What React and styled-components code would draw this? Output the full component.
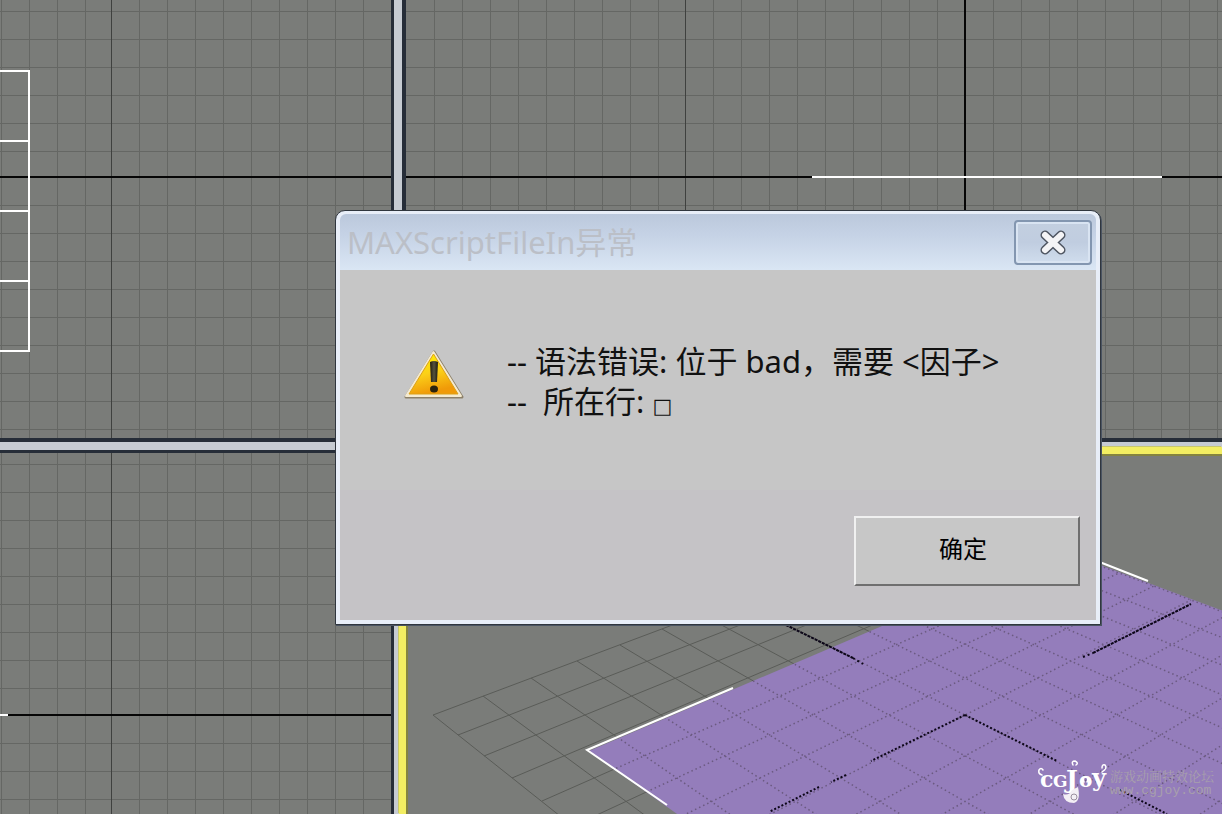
import styled, { createGlobalStyle } from 'styled-components';

const GlobalStyle = createGlobalStyle`
  * {
    box-sizing: border-box;
  }

  body {
    margin: 0;
    overflow: hidden;
    font-family: 'Noto Sans', 'Noto Sans CJK SC', sans-serif;
  }
`;

const Workspace = styled.main`
  position: relative;
  display: grid;
  grid-template-columns: minmax(0, 391fr) 15px minmax(0, 816fr);
  grid-template-rows: minmax(0, 438fr) 15px minmax(0, 361fr);
  height: 100vh;
  overflow: hidden;
  background: #797b78;
`;

const Viewport = styled.section`
  grid-column: ${(props) => props.$col};
  grid-row: ${(props) => props.$row};
  background: #7a7c79;
  overflow: hidden;

  svg {
    display: block;
    width: 100%;
    height: 100%;
  }
`;

/* the active view overlaps half of the splitters with its yellow frame */
const ActiveViewport = styled(Viewport)`
  z-index: 1;
  margin: -6px 0 0 -7px;
  border: solid #f3ee62;
  border-width: 7px 0 0 7px;
  box-shadow: inset 2px 2px 0 #85843f, -1px -1px 0 #c9c86c;
`;

const SplitterX = styled.div`
  grid-column: 1 / 4;
  grid-row: 2;
  background: #c6cbd2;
  border: solid #262d38;
  border-width: 4px 0 3px;
`;

const SplitterY = styled.div`
  grid-column: 2;
  grid-row: 1 / 4;
  background: #c6cbd2;
  border: solid #262d38;
  border-width: 0 4px 0 3px;
`;

const Dialog = styled.div`
  position: absolute;
  z-index: 2;
  top: 210px;
  left: 335px;
  width: 766px;
  display: flex;
  flex-direction: column;
  padding: 3px 4px 4px;
  border: 1px solid #30363e;
  border-radius: 10px 10px 0 0;
  background: #e8eef8;
  box-shadow: 1px 1px 0 #4a5462;
`;

const TitleBar = styled.header`
  display: flex;
  justify-content: space-between;
  align-items: flex-start;
  height: 56px;
  padding: 6px 4px 0 7px;
  border-radius: 6px 6px 0 0;
  background: linear-gradient(#bbc8dc, #c6d3e6 40%, #dae6f4);
`;

const Title = styled.h1`
  margin: 0;
  font-size: 31px;
  font-weight: 400;
  line-height: 44px;
  color: #bbbfc7;
`;

const CloseButton = styled.button`
  display: flex;
  align-items: center;
  justify-content: center;
  width: 78px;
  height: 45px;
  padding: 0;
  border: 2px solid #8396b0;
  border-radius: 4px;
  background: linear-gradient(#c3cfe0, #c0cde0 50%, #d0dded);
  box-shadow: inset 0 0 0 2px #d9e4f2;
`;

const Message = styled.div`
  display: flex;
  align-items: flex-start;
  gap: 43px;
  height: 220px;
  padding: 71px 24px 0 64px;
  background: #c6c6c6;

  svg {
    flex: none;
    margin-top: 8px;
  }
`;

const MessageText = styled.p`
  margin: 0;
  font-size: 31px;
  line-height: 40px;
  white-space: pre;
  color: #111;
`;

const Box = styled.span`
  font-family: 'DejaVu Sans', sans-serif;
  font-size: 21px;
  line-height: 20px;
`;

const Footer = styled.footer`
  display: flex;
  justify-content: flex-end;
  padding: 26px 16px 34px;
  background: #c5c3c6;
`;

const OkButton = styled.button`
  width: 226px;
  height: 70px;
  padding: 0 8px 8px 0;
  border: 2px solid;
  border-color: #f0f0f0 #6f6f6f #6f6f6f #f0f0f0;
  background: #c7c7c7;
  font-family: 'Liberation Sans', 'Noto Sans CJK SC', sans-serif;
  font-size: 24px;
  color: #000;
`;

const Watermark = styled.aside`
  position: absolute;
  z-index: 1;
  right: 8px;
  bottom: 8px;
  display: flex;
  align-items: center;
  gap: 2px;
`;

const WatermarkText = styled.div`
  display: flex;
  flex-direction: column;
  font-family: 'Noto Serif CJK SC', 'Noto Sans CJK SC', sans-serif;
  font-size: 13px;
  line-height: 16px;
  color: #a8a0ac;
`;

const SiteLink = styled.a`
  font-family: 'Liberation Mono', monospace;
  font-size: 13px;
  line-height: 14px;
  text-decoration: none;
  color: #a8a0ac;
`;

const range = (start, end, step = 28) => {
  const out = [];
  for (let n = start; n <= end; n += step) out.push(n);
  return out;
};

// orthographic grid, majors are drawn darker than the rest
const OrthoGrid = ({ xs, ys, majorX, axisY, children }) => (
  <svg aria-hidden="true" shapeRendering="crispEdges">
    <g fill="#656764">
      {xs.map((x) => <rect key={x} x={x} y="0" width="1" height="100%" />)}
      {ys.map((y) => <rect key={y} x="0" y={y} width="100%" height="1" />)}
    </g>
    <rect x={majorX} y="0" width="1" height="100%" fill="#3f413f" />
    <rect x="0" y={axisY} width="100%" height="2" fill="#060606" />
    {children}
  </svg>
);

// perspective floor: u, v are grid cells from the world origin
const project = (u, v) => {
  const w = 1 + 0.0256 * (u + v);
  return [559 + (38 * (u - v)) / w, 261 - 758 + 758 / w];
};

const pathOf = (points) =>
  'M' + points.map(([u, v]) => project(u, v).map(Math.round).join(' ')).join('L');

const floorLines = range(-7, 7, 1)
  .map((n) => pathOf([[n, -7], [n, 7]]) + pathOf([[-7, n], [7, n]]))
  .join('');

const planePath = pathOf([[-5.6, 3.85], [7.05, 3.85], [7.05, -8.7], [-5.6, -8.7]]) + 'Z';

const Floor = () => (
  <svg aria-hidden="true">
    <defs>
      <clipPath id="plane">
        <path d={planePath} />
      </clipPath>
    </defs>
    <path d={floorLines} fill="none" stroke="#5a5c58" />
    <path d={planePath} fill="#947dbb" />
    <g clipPath="url(#plane)">
      <path d={floorLines} fill="none" stroke="#6b5a80" strokeWidth="1.5" strokeDasharray="1.5 3" />
    </g>
    <g fill="none" stroke="#0c0618" strokeWidth="2">
      <path d="M380 171L447 204M687 199L785 150" strokeDasharray="3 1" />
      <path d="M447 204L457 210M677 203L687 199" strokeDasharray="2 3" />
      <path d="M559 261L465 307M559 261L651 307M440 321L425 328M413 333L363 358M714 336L761 360" strokeDasharray="2 2" />
    </g>
    <g fill="none" stroke="#fff" strokeWidth="2">
      <path d="M327 234L181 296L261 351M691 107L742 127" />
    </g>
  </svg>
);

const WarningIcon = () => (
  <svg width="60" height="52" viewBox="0 0 60 52" role="img" aria-label="警告">
    <defs>
      <linearGradient id="warn" x1="0" y1="0" x2="0.3" y2="1">
        <stop offset="0" stopColor="#fff200" />
        <stop offset="0.55" stopColor="#fbd018" />
        <stop offset="1" stopColor="#f09a08" />
      </linearGradient>
      <linearGradient id="bang" x1="0" y1="0" x2="1" y2="0">
        <stop offset="0" stopColor="#1c1a10" />
        <stop offset="0.5" stopColor="#55523c" />
        <stop offset="1" stopColor="#1c1a10" />
      </linearGradient>
    </defs>
    <path d="M30 3L58 48H2Z" fill="#8c8069" stroke="#8c8069" strokeWidth="3" strokeLinejoin="round" />
    <path d="M29.500 3L57 47H2Z" fill="#f4ead0" stroke="#f4ead0" strokeWidth="2" strokeLinejoin="round" />
    <path d="M29.500 5L54 45H5Z" fill="url(#warn)" stroke="#dda117" strokeWidth="1" strokeLinejoin="round" />
    <path d="M26 13Q30 11 34 13L33 33H27Z" fill="url(#bang)" />
    <ellipse cx="30" cy="40" rx="4" ry="3.500" fill="#2c240e" />
  </svg>
);

const CloseIcon = () => (
  <svg width="30" height="28" viewBox="0 0 30 28" aria-hidden="true">
    <g fill="none" strokeLinecap="round">
      <path d="M7 6L23 21M23 6L7 21" stroke="#4c535f" strokeWidth="9" />
      <path d="M7 6L23 21M23 6L7 21" stroke="#f4f4f6" strokeWidth="6" />
    </g>
  </svg>
);

const Logo = () => (
  <svg width="70" height="46" viewBox="0 0 70 46" role="img" aria-label="cgjoy">
    <g fill="#fff" fontFamily="DejaVu Serif, serif" fontWeight="700">
      <text x="2" y="27" fontSize="22">c</text>
      <text x="15" y="27" fontSize="17">G</text>
      <text x="28" y="28" fontSize="25">J</text>
      <text x="41" y="27" fontSize="20">o</text>
      <text x="54" y="26" fontSize="24">y</text>
    </g>
    <g fill="none" stroke="#fff" strokeWidth="1.5" strokeLinecap="round">
      <path d="M4 15Q0 14 1 10Q3 7 5 10" />
      <path d="M35 5Q33 1 37 1Q41 3 38 5" />
      <path d="M64 12Q70 8 67 5Q64 4 64 8" />
      <path d="M46 22Q44 17 48 17Q51 19 49 22" />
    </g>
    <path d="M25 34Q31 36 34 30L40 27Q43 41 36 43Q26 43 25 34Z" fill="#f3eff5" />
    <circle cx="36" cy="37" r="3" fill="none" stroke="#9a8f9f" />
  </svg>
);

const App = () => {
  return (
    <Workspace>
      <GlobalStyle />
      <Viewport $col={1} $row={1} aria-label="Top">
        <OrthoGrid xs={[1, 29, 57, 85, ...range(139, 391)]} ys={[...range(11, 151), ...range(205, 438)]} majorX={111} axisY={176}>
          <g fill="#fff">
            <rect x="28" y="70" width="2" height="282" />
            {range(70, 350, 70).map((y) => <rect key={y} x="0" y={y} width="30" height="2" />)}
          </g>
        </OrthoGrid>
      </Viewport>
      <Viewport $col={3} $row={1} aria-label="Front">
        <OrthoGrid xs={[...range(28, 252), ...range(307, 531), ...range(587, 900)]} ys={[...range(11, 151), ...range(205, 438)]} majorX={279} axisY={176}>
          <rect x="558" y="0" width="2" height="100%" fill="#060606" />
          <rect x="406" y="176" width="350" height="2" fill="#fff" />
        </OrthoGrid>
      </Viewport>
      <Viewport $col={1} $row={3} aria-label="Left">
        <OrthoGrid xs={[1, 29, 57, 85, ...range(139, 391)]} ys={[...range(11, 235), ...range(290, 700)]} majorX={111} axisY={261}>
          <rect x="0" y="261" width="8" height="2" fill="#fff" />
        </OrthoGrid>
      </Viewport>
      <SplitterX />
      <SplitterY />
      <ActiveViewport $col={3} $row={3} aria-label="Perspective">
        <Floor />
      </ActiveViewport>

      <Dialog role="alertdialog" aria-labelledby="dialog-title" aria-describedby="dialog-text">
        <TitleBar>
          <Title id="dialog-title">MAXScriptFileIn异常</Title>
          <CloseButton type="button" aria-label="关闭">
            <CloseIcon />
          </CloseButton>
        </TitleBar>
        <Message>
          <WarningIcon />
          <MessageText id="dialog-text">
            {'-- 语法错误: 位于 bad，需要 <因子>\n--  所在行: '}
            <Box>□</Box>
          </MessageText>
        </Message>
        <Footer>
          <OkButton type="button">确定</OkButton>
        </Footer>
      </Dialog>

      <Watermark>
        <Logo />
        <WatermarkText>
          <span>游戏动画特效论坛</span>
          <SiteLink href="#">www.cgjoy.com</SiteLink>
        </WatermarkText>
      </Watermark>
    </Workspace>
  );
};

export default App;
